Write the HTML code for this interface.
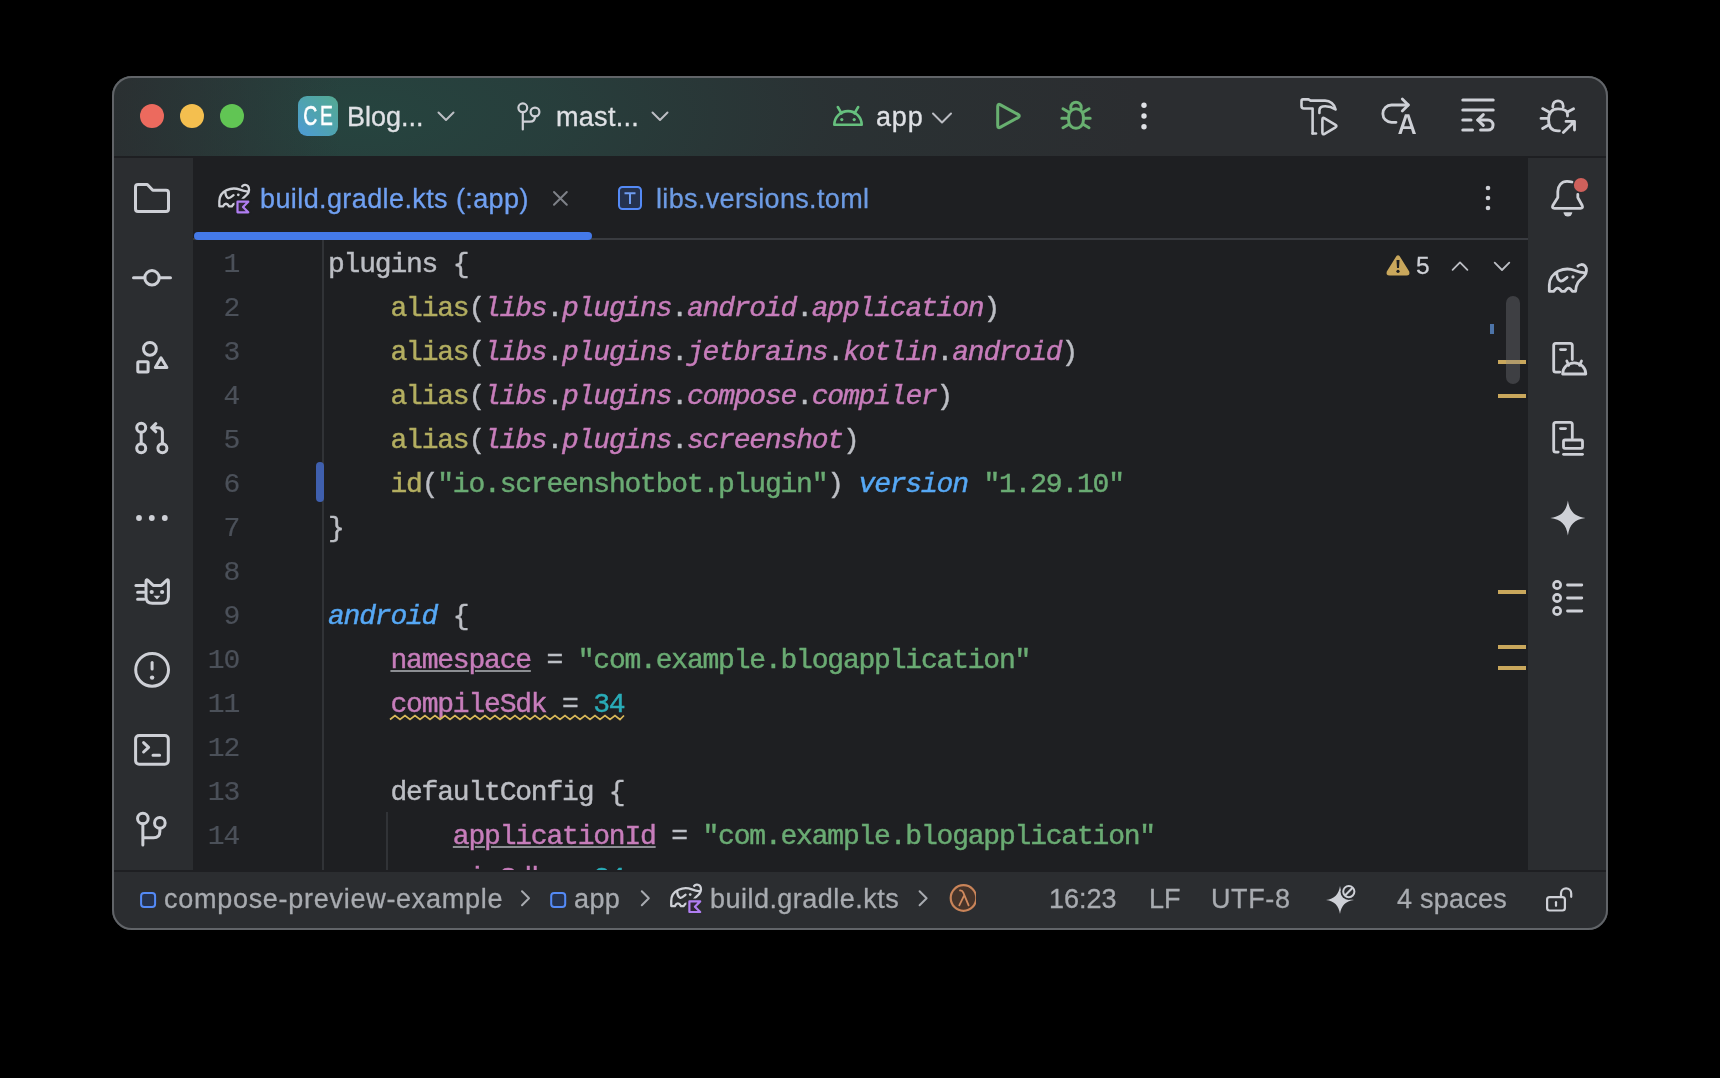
<!DOCTYPE html>
<html><head><meta charset="utf-8">
<style>
*{margin:0;padding:0;box-sizing:border-box}
html,body{width:1720px;height:1078px;background:#000;overflow:hidden}
body{position:relative;font-family:"Liberation Sans",sans-serif}
.code,.ui{will-change:transform}
.a{position:absolute}
.win{position:absolute;left:112px;top:76px;width:1496px;height:854px;border-radius:20px;background:#2B2D30;overflow:hidden}
.wb{position:absolute;left:112px;top:76px;width:1496px;height:854px;border-radius:20px;border:2px solid #616468;pointer-events:none}
.title{position:absolute;left:0;top:0;width:1496px;height:80px;background:#2B2D30}
.tg{position:absolute;left:0;top:0;width:1494px;height:80px;background:radial-gradient(ellipse 780px 320px at 250px 40px,rgba(38,68,63,1) 0%,rgba(39,64,61,0.9) 25%,rgba(41,54,55,0.5) 60%,rgba(43,45,48,0) 100%)}
.tg2{position:absolute;left:0;top:0;width:230px;height:80px;background:linear-gradient(to right,rgba(43,45,48,0.8),rgba(43,45,48,0))}
.sep{position:absolute;left:0;top:80px;width:1496px;height:2px;background:#1E1F22}
.tabs{position:absolute;left:81px;top:82px;width:1335px;height:82px;background:#1E1F22}
.tabline{position:absolute;left:81px;top:162px;width:1335px;height:2px;background:#393B40}
.editor{position:absolute;left:81px;top:164px;width:1335px;height:630px;background:#1E1F22}
.status{position:absolute;left:0;top:794px;width:1496px;height:60px;background:#2B2D30;border-top:2px solid #1E1F22}
.code{font-family:"Liberation Mono",monospace;font-size:28px;letter-spacing:-1.2px;-webkit-text-stroke:0.45px currentColor;white-space:pre;color:#BCBEC4;height:44px;line-height:44px;position:absolute}
.ln{width:56px;text-align:right;color:#4B5059;-webkit-text-stroke:0.2px currentColor}
.y{color:#B3AE60}.p{color:#C77DBB;font-style:italic}.s{color:#6AAB73}.b{color:#56A8F5;font-style:italic}.n{color:#2AACB8}.pu{color:#C77DBB}
.u{text-decoration:underline;text-decoration-color:#8c8e93;text-underline-offset:2px;text-decoration-thickness:2px}
.ui{position:absolute;font-family:"Liberation Sans",sans-serif;color:#DFE1E5;font-size:27px;-webkit-text-stroke:0.3px currentColor;white-space:pre;line-height:32px;height:32px}
.st{color:#A8ABB0}
svg{position:absolute;overflow:visible}
.ic{fill:none;stroke:#CED0D6;stroke-width:3;stroke-linecap:round;stroke-linejoin:round}
</style></head><body>
<div class="win">
  <div class="title"></div><div class="tg"></div><div class="tg2"></div>
  <div class="sep"></div>
  <div class="tabs"></div>
  <div class="editor"></div>
  <div class="tabline"></div>
  <div class="status"></div>
</div>
<div class="wb"></div>
<div class="a" style="left:140px;top:104px;width:24px;height:24px;border-radius:50%;background:#EC6A5E"></div>
<div class="a" style="left:180px;top:104px;width:24px;height:24px;border-radius:50%;background:#F4BF4F"></div>
<div class="a" style="left:220px;top:104px;width:24px;height:24px;border-radius:50%;background:#61C554"></div>

<div class="a" style="left:298px;top:96px;width:40px;height:40px;border-radius:9px;background:linear-gradient(45deg,#4D9AD6 0%,#4FA3B0 50%,#55AA92 100%)"></div>
<div class="a" style="left:290px;top:96px;width:56px;height:40px;color:#fff;font-family:'Liberation Sans',sans-serif;font-size:27.5px;line-height:40px;text-align:center;transform:scaleX(0.7);-webkit-text-stroke:0.7px #fff;letter-spacing:4px;text-indent:4px;will-change:transform">CE</div>
<div class="ui" style="left:347px;top:101px">Blog...</div>
<div class="ui" style="left:556px;top:101px;letter-spacing:0.3px">mast...</div>
<div class="ui" style="left:876px;top:101px;letter-spacing:0.8px">app</div>
<svg width="1720" height="1078" style="left:0;top:0">
 <g class="ic" style="stroke:#BCBEC4;stroke-width:2">
  <path d="M438.5 112.5 L446 120 L453.5 112.5"/>
  <path d="M652.5 112.5 L660 120 L667.5 112.5"/>
  <path d="M933 113.5 L942 122.5 L951 113.5"/>
 </g>
 <g class="ic" style="stroke:#CED0D6;stroke-width:2.2">
  <circle cx="522.8" cy="107.8" r="4.4"/>
  <circle cx="535" cy="112" r="4.4"/>
  <path d="M522.8 112.3 V129.5 M522.8 121.6 H530 Q535 121.6 535 116.4"/>
 </g>
 <g class="ic" style="stroke:#66C07E;stroke-width:2.6">
  <path d="M834.3 124.8 A13.7 13.7 0 0 1 861.7 124.8 Z"/>
  <path d="M837.8 107 L841.5 113.3 M858.2 107 L854.5 113.3"/>
 </g>
 <circle cx="841.8" cy="119.6" r="1.6" fill="#66C07E"/>
 <circle cx="854.2" cy="119.6" r="1.6" fill="#66C07E"/>
 <g class="ic" style="stroke:#68B070;stroke-width:3">
  <path d="M997.7 106.5 Q997.7 103.3 1000.5 104.9 L1018 114.4 Q1020.6 116 1018 117.6 L1000.5 127.1 Q997.7 128.7 997.7 125.5 Z"/>
 </g>
 <g class="ic" style="stroke:#68B070;stroke-width:3">
  <rect x="1068.6" y="108.7" width="14.8" height="19.6" rx="7.4" ry="8"/>
  <path d="M1070.8 108.5 V107.3 A5.2 5.2 0 0 1 1081.2 107.3 V108.5"/>
  <path d="M1063 108.8 L1068.5 112 M1061.8 118.3 H1067.5 M1063 127.7 L1068.5 124.5"/>
  <path d="M1089 108.8 L1083.5 112 M1090.2 118.3 H1084.5 M1089 127.7 L1083.5 124.5"/>
 </g>
 <g fill="#DFE1E5">
  <circle cx="1144" cy="105.2" r="2.7"/><circle cx="1144" cy="116" r="2.7"/><circle cx="1144" cy="126.8" r="2.7"/>
 </g>
 <g class="ic" style="stroke-width:2.6">
  <path d="M1312.6 133.5 V108.5 H1304 Q1301.5 108.5 1301.5 106 V101 Q1301.5 99.4 1303 99.4 H1308.5 L1310.5 100.6 H1325 C1330 100.6 1334.5 104 1335.6 109.5 C1331 106.5 1327 105.8 1322.5 106.5 C1320.3 107 1319.4 108.5 1319.4 110.5 V113"/>
  <path d="M1312.6 133.5 H1316"/>
  <path d="M1322.4 119.5 V132.5 Q1322.4 135 1324.6 133.8 L1335.5 127.3 Q1337.3 126 1335.5 124.8 L1324.6 118.3 Q1322.4 117 1322.4 119.5 Z"/>
 </g>
 <g class="ic" style="stroke-width:2.8">
  <path d="M1396 122.3 H1391.5 A8.6 8.6 0 0 1 1391.5 105 H1408.3"/>
  <path d="M1402.3 99 L1408.3 105 L1402.3 111"/>
 </g>
 <path d="M1398.2 134 L1404.9 114.2 H1409.3 L1416 134 H1412.6 L1411 129 H1403.2 L1401.6 134 Z M1404.1 126.2 H1410.1 L1407.1 117 Z" fill="#CED0D6"/>
 <g class="ic" style="stroke-width:3">
  <path d="M1462.8 100 H1493.2 M1462.8 110 H1493.2 M1462.8 120 H1471 M1462.8 130.1 H1472.5"/>
  <path d="M1480.6 130.1 H1488 A5 5 0 0 0 1488 120 H1477.8"/>
  <path d="M1483.3 114.6 L1477.8 120 L1483.3 125.4"/>
 </g>
 <g class="ic" style="stroke-width:2.8">
  <path d="M1552.8 107 V106 A5.2 5.2 0 0 1 1563.2 106 V107"/>
  <path d="M1567.5 115.5 V116 V114 Q1567.5 108.8 1558 108.8 Q1548.6 108.8 1548.6 119.9 Q1548.6 130.8 1558 130.8 H1559.5"/>
  <path d="M1542.6 108.6 L1549 112 M1541 118.4 H1547.5 M1542.6 128.5 L1549 124.8 M1573.6 108.8 L1567.5 112"/>
  <path d="M1563.3 132.6 L1574.5 121.4 M1566 121.4 H1574.5 V130"/>
 </g>
</svg>

<svg width="1720" height="1078" style="left:0;top:0">
 <g transform="translate(218.3 183.7) scale(0.8)">
  <path d="M29.9 3.2 C31.5 1.2 35 0.8 37 3 C39.2 5.5 38.8 10 36.5 12.8 C34.5 15.3 31.5 17 30 19.5 C28.2 22.5 27.6 25.5 27.6 28.3 H24.3 Q20.6 21.8 16.9 28.3 H13.5 Q9.6 21.8 5.8 28.3 H1.3 V22 C1.3 16 5 10.5 10.5 8 C16 5.5 22 5.5 27 7.5 C31 9 35 10.5 37.8 9.2 M8.8 9.5 C8.8 13 10 17 12.4 18 C14.5 18.8 17 16 19.1 14.3" fill="none" stroke="#CED0D6" stroke-width="2.9" stroke-linecap="round" stroke-linejoin="round"/>
  <circle cx="25" cy="13.9" r="1.7" fill="#CED0D6"/>
 </g>
 <path d="M237.5 201.7 H248.3 L243 207 L248.3 212.3 H237.5 Z" fill="#1E1F22" stroke="#1E1F22" stroke-width="6" stroke-linejoin="round"/>
 <path d="M237.5 201.7 H248.3 L243 207 L248.3 212.3 H237.5 Z" fill="#2D2636" stroke="#B07EF2" stroke-width="2.2" stroke-linejoin="round"/>
 <path d="M554 192 L566.8 204.8 M566.8 192 L554 204.8" stroke="#7E8188" stroke-width="2" stroke-linecap="round"/>
 <rect x="619" y="187" width="22" height="22" rx="3.5" fill="#25324D" stroke="#548AF7" stroke-width="2"/>
 <path d="M624.5 193.3 H635.5 M630 193.3 V204" stroke="#6E9CF0" stroke-width="2"/>
 <g fill="#CED0D6"><circle cx="1488" cy="188" r="2.3"/><circle cx="1488" cy="198" r="2.3"/><circle cx="1488" cy="208" r="2.3"/></g>
 <rect x="194" y="232" width="398" height="8" rx="4" fill="#4479E8"/>
</svg>
<div class="ui" style="left:260px;top:182.5px;color:#70A0F2;letter-spacing:0.4px">build.gradle.kts (:app)</div>
<div class="ui" style="left:656px;top:183px;color:#6D9BE3;letter-spacing:0.35px">libs.versions.toml</div>

<svg width="1720" height="1078" style="left:0;top:0">
 <g class="ic">
  <path d="M135.5 209 V187 Q135.5 184.5 138 184.5 H147.3 L152.8 190.3 H166 Q168.5 190.3 168.5 192.8 V209 Q168.5 211.5 166 211.5 H138 Q135.5 211.5 135.5 209 Z"/>
  <path d="M133.5 277.8 H144.8 M159.2 277.8 H170.5"/>
  <circle cx="152" cy="277.8" r="7.2"/>
  <circle cx="149.9" cy="348.8" r="6.4"/>
  <rect x="137.8" y="361.7" width="10.3" height="10.3" rx="1"/>
  <path d="M155.4 367.5 L161 357.8 L166.9 367.5 Z"/>
  <circle cx="141.2" cy="427.7" r="4.5"/>
  <circle cx="141.2" cy="448.3" r="4.5"/>
  <circle cx="162.4" cy="448.3" r="4.5"/>
  <path d="M141.2 432.2 V443.8 M162.4 443.8 V432 Q162.4 427.7 158 427.7 H151.8 M155.8 423.6 L151.6 427.7 L155.8 431.8"/>
  <path d="M146 596.5 V581.5 Q146 578.7 148.2 580.7 L153.2 585.4 H161.3 L166.3 580.7 Q168.4 578.7 168.4 581.5 V597 Q168.4 603.3 162 603.3 H152.4 Q146 603.3 146 597 Z"/>
  <path d="M135.9 585.4 H144 M137.6 592.3 H144 M137.6 599.2 H144"/>
  <circle cx="152.1" cy="669.8" r="16.4"/>
  <path d="M152.1 662.6 V669"/>
  <rect x="135.6" y="735.5" width="32.7" height="28.7" rx="3.5"/>
  <path d="M143.6 742.6 L148.6 747.3 L143.6 752 M153 755.3 H159.6"/>
  <circle cx="142.85" cy="818.5" r="5.3"/>
  <circle cx="159.85" cy="822.9" r="5.3"/>
  <path d="M142.85 823.8 V845 M142.85 837.8 H153.5 Q159.85 837.8 159.85 831.5 V828.2"/>
 </g>
 <g fill="#CED0D6">
  <circle cx="139" cy="518" r="2.9"/><circle cx="151.8" cy="518" r="2.9"/><circle cx="164.8" cy="518" r="2.9"/>
  <circle cx="151.7" cy="592" r="2.1"/><circle cx="162.1" cy="592" r="2.1"/>
  <path d="M153.6 595.8 H160.4 L157 599.6 Z"/>
  <circle cx="152.1" cy="677.6" r="2.2"/>
 </g>
 <!-- right stripe -->
 <g class="ic" style="stroke-width:2.8">
  <path d="M1572 182 Q1569.5 181.4 1567 181.4 C1561.5 181.4 1557.8 185.8 1557.8 191.5 V197.5 L1552.8 205.5 Q1551.6 208.3 1554.5 208.3 H1580.5 Q1583.4 208.3 1582.2 205.5 L1577.8 197.5 V194.5"/>
  <path d="M1563.2 357.5 V345.5 Q1563.2 342.5 1560 342.5" style="display:none"/>
  <path d="M1572.3 359.5 V345.5 Q1572.3 343.4 1570.2 343.4 H1555.8 Q1553.7 343.4 1553.7 345.5 V370 Q1553.7 372.1 1555.8 372.1 H1559.8"/>
  <path d="M1560.5 349.6 H1565.5"/>
  <path d="M1572.3 438 V424.5 Q1572.3 422.4 1570.2 422.4 H1555.8 Q1553.7 422.4 1553.7 424.5 V450 Q1553.7 452.1 1555.8 452.1 H1558.2"/>
  <path d="M1560.5 428.6 H1565.5"/>
  <rect x="1563.5" y="440" width="19" height="8.3" rx="1.5"/>
  <path d="M1563.5 454.3 H1582.5"/>
  <circle cx="1557.1" cy="585" r="3.6" style="stroke-width:2.6"/>
  <circle cx="1557.1" cy="598" r="3.6" style="stroke-width:2.6"/>
  <circle cx="1557.1" cy="611" r="3.6" style="stroke-width:2.6"/>
  <path d="M1567.5 585 H1581.8 M1567.5 598 H1581.8 M1567.5 611 H1581.8"/>
 </g>
 <g class="ic" style="stroke-width:2.8">
  <path d="M1562.6 374 A11.6 11.2 0 0 1 1585.8 374 Z"/>
  <path d="M1566.8 361 L1568.8 365.3 M1581.5 361 L1579.5 365.3"/>
 </g>
 <path d="M1563.5 212.3 H1572.3 A4.4 4.2 0 0 1 1563.5 212.3 Z" fill="#CED0D6"/>
 <circle cx="1581" cy="185" r="7.1" fill="#CF605B"/>
 <g transform="translate(1548 263)">
  <path d="M29.9 3.2 C31.5 1.2 35 0.8 37 3 C39.2 5.5 38.8 10 36.5 12.8 C34.5 15.3 31.5 17 30 19.5 C28.2 22.5 27.6 25.5 27.6 28.3 H24.3 Q20.6 21.8 16.9 28.3 H13.5 Q9.6 21.8 5.8 28.3 H1.3 V22 C1.3 16 5 10.5 10.5 8 C16 5.5 22 5.5 27 7.5 C31 9 35 10.5 37.8 9.2 M8.8 9.5 C8.8 13 10 17 12.4 18 C14.5 18.8 17 16 19.1 14.3" fill="none" stroke="#CED0D6" stroke-width="2.8" stroke-linecap="round" stroke-linejoin="round"/>
  <circle cx="25" cy="13.9" r="1.6" fill="#CED0D6"/>
 </g>
 <path d="M1567.9 500.4 C1569.5 511.5 1574.5 516.4 1585.5 518 C1574.5 519.6 1569.5 524.5 1567.9 535.5 C1566.3 524.5 1561.3 519.6 1550.3 518 C1561.3 516.4 1566.3 511.5 1567.9 500.4 Z" fill="#CED0D6"/>
</svg>

<div class="a" style="left:193px;top:240px;width:1334px;height:630px;overflow:hidden">
<div class="a" style="left:129px;top:0;width:2px;height:630px;background:#313337"></div>
<div class="a" style="left:193px;top:572px;width:2px;height:58px;background:#313337"></div>
<div class="a" style="left:123px;top:222px;width:8px;height:40px;border-radius:4px;background:#3F5FAE"></div>
<div class="code ln" style="top:3.40px;left:-10px">1</div>
<div class="code cl" style="top:3.40px;left:135px">plugins {</div>
<div class="code ln" style="top:47.35px;left:-10px">2</div>
<div class="code cl" style="top:47.35px;left:135px">    <span class="y">alias</span>(<span class="p">libs</span>.<span class="p">plugins</span>.<span class="p">android</span>.<span class="p">application</span>)</div>
<div class="code ln" style="top:91.30px;left:-10px">3</div>
<div class="code cl" style="top:91.30px;left:135px">    <span class="y">alias</span>(<span class="p">libs</span>.<span class="p">plugins</span>.<span class="p">jetbrains</span>.<span class="p">kotlin</span>.<span class="p">android</span>)</div>
<div class="code ln" style="top:135.25px;left:-10px">4</div>
<div class="code cl" style="top:135.25px;left:135px">    <span class="y">alias</span>(<span class="p">libs</span>.<span class="p">plugins</span>.<span class="p">compose</span>.<span class="p">compiler</span>)</div>
<div class="code ln" style="top:179.20px;left:-10px">5</div>
<div class="code cl" style="top:179.20px;left:135px">    <span class="y">alias</span>(<span class="p">libs</span>.<span class="p">plugins</span>.<span class="p">screenshot</span>)</div>
<div class="code ln" style="top:223.15px;left:-10px">6</div>
<div class="code cl" style="top:223.15px;left:135px">    <span class="y">id</span>(<span class="s">"io.screenshotbot.plugin"</span>) <span class="b">version</span> <span class="s">"1.29.10"</span></div>
<div class="code ln" style="top:267.10px;left:-10px">7</div>
<div class="code cl" style="top:267.10px;left:135px">}</div>
<div class="code ln" style="top:311.05px;left:-10px">8</div>
<div class="code cl" style="top:311.05px;left:135px"></div>
<div class="code ln" style="top:355.00px;left:-10px">9</div>
<div class="code cl" style="top:355.00px;left:135px"><span class="b">android</span> {</div>
<div class="code ln" style="top:398.95px;left:-10px">10</div>
<div class="code cl" style="top:398.95px;left:135px">    <span class="pu u">namespace</span> = <span class="s">"com.example.blogapplication"</span></div>
<div class="code ln" style="top:442.90px;left:-10px">11</div>
<div class="code cl" style="top:442.90px;left:135px">    <span class="pu">compileSdk</span> = <span class="n">34</span></div>
<div class="code ln" style="top:486.85px;left:-10px">12</div>
<div class="code cl" style="top:486.85px;left:135px"></div>
<div class="code ln" style="top:530.80px;left:-10px">13</div>
<div class="code cl" style="top:530.80px;left:135px">    defaultConfig {</div>
<div class="code ln" style="top:574.75px;left:-10px">14</div>
<div class="code cl" style="top:574.75px;left:135px">        <span class="pu u">applicationId</span> = <span class="s">"com.example.blogapplication"</span></div>
<div class="code cl" style="top:616.70px;left:135px">        <span class="pu">minSdk</span> = <span class="n">24</span></div>
</div>
<svg width="1720" height="1078" style="left:0;top:0"><path d="M390 719.5 L395.0 715.5 L400.0 719.5 L405.0 715.5 L410.0 719.5 L415.0 715.5 L420.0 719.5 L425.0 715.5 L430.0 719.5 L435.0 715.5 L440.0 719.5 L445.0 715.5 L450.0 719.5 L455.0 715.5 L460.0 719.5 L465.0 715.5 L470.0 719.5 L475.0 715.5 L480.0 719.5 L485.0 715.5 L490.0 719.5 L495.0 715.5 L500.0 719.5 L505.0 715.5 L510.0 719.5 L515.0 715.5 L520.0 719.5 L525.0 715.5 L530.0 719.5 L535.0 715.5 L540.0 719.5 L545.0 715.5 L550.0 719.5 L555.0 715.5 L560.0 719.5 L565.0 715.5 L570.0 719.5 L575.0 715.5 L580.0 719.5 L585.0 715.5 L590.0 719.5 L595.0 715.5 L600.0 719.5 L605.0 715.5 L610.0 719.5 L615.0 715.5 L620.0 719.5 L624.0 715.5" fill="none" stroke="#D9B95A" stroke-width="1.7" stroke-linejoin="miter"/></svg>
<svg width="1720" height="1078" style="left:0;top:0">
 <path d="M1398 256.5 Q1398 254.2 1396.3 256.2 L1386.8 271.5 Q1385.6 275.5 1389.5 275.5 H1406.5 Q1410.4 275.5 1409.2 271.5 L1399.7 256.2 Q1398 254.2 1398 256.5 Z" fill="#C9A75C"/>
 <path d="M1396.5 260 L1399.5 260 L1399 268 L1397 268 Z" fill="#1E1F22"/>
 <circle cx="1398" cy="271.3" r="1.6" fill="#1E1F22"/>
 <g fill="none" stroke="#BCBEC4" stroke-width="1.8" stroke-linecap="round" stroke-linejoin="round">
  <path d="M1452.6 269.8 L1460 262.4 L1467.4 269.8"/>
  <path d="M1494.7 262.6 L1502 270 L1509.3 262.6"/>
 </g>
 <rect x="1490" y="324" width="4" height="10" fill="#4D74A8"/>
 <g fill="#C9A75C">
  <rect x="1498" y="360" width="28" height="4"/>
  <rect x="1498" y="394" width="28" height="4"/>
  <rect x="1498" y="590" width="28" height="4"/>
  <rect x="1498" y="645" width="28" height="4"/>
  <rect x="1498" y="666" width="28" height="4"/>
 </g>
 <rect x="1506" y="296" width="14" height="88" rx="7" fill="rgba(130,132,138,0.32)"/>
</svg>
<div class="ui" style="left:1416px;top:250px;color:#CED0D6;font-size:24.5px">5</div>

<svg width="1720" height="1078" style="left:0;top:0">
 <rect x="141.1" y="893" width="14" height="14" rx="3" fill="#25324D" stroke="#548AF7" stroke-width="2"/>
 <rect x="551.2" y="893" width="14" height="14" rx="3" fill="#25324D" stroke="#548AF7" stroke-width="2"/>
 <g fill="none" stroke="#A8ABB0" stroke-width="2" stroke-linecap="round" stroke-linejoin="round">
  <path d="M522 891.2 L529 898.2 L522 905.2"/>
  <path d="M641.8 891.2 L648.8 898.2 L641.8 905.2"/>
  <path d="M919.6 891.2 L926.6 898.2 L919.6 905.2"/>
 </g>
 <g transform="translate(670.2 883.4) scale(0.8)">
  <path d="M29.9 3.2 C31.5 1.2 35 0.8 37 3 C39.2 5.5 38.8 10 36.5 12.8 C34.5 15.3 31.5 17 30 19.5 C28.2 22.5 27.6 25.5 27.6 28.3 H24.3 Q20.6 21.8 16.9 28.3 H13.5 Q9.6 21.8 5.8 28.3 H1.3 V22 C1.3 16 5 10.5 10.5 8 C16 5.5 22 5.5 27 7.5 C31 9 35 10.5 37.8 9.2 M8.8 9.5 C8.8 13 10 17 12.4 18 C14.5 18.8 17 16 19.1 14.3" fill="none" stroke="#CED0D6" stroke-width="2.9" stroke-linecap="round" stroke-linejoin="round"/>
  <circle cx="25" cy="13.9" r="1.7" fill="#CED0D6"/>
 </g>
 <path d="M689.4 901.4 H700.2 L694.9 906.7 L700.2 912 H689.4 Z" fill="#2B2D30" stroke="#2B2D30" stroke-width="6" stroke-linejoin="round"/>
 <path d="M689.4 901.4 H700.2 L694.9 906.7 L700.2 912 H689.4 Z" fill="#2D2636" stroke="#B07EF2" stroke-width="2.2" stroke-linejoin="round"/>
 <circle cx="963.5" cy="898" r="12.8" fill="#46342A" stroke="#C98459" stroke-width="2.2"/>
 <path d="M960 890.5 Q962.3 890.2 963.3 892.6 L968.6 905.3 M964.2 895.4 L959.3 905.3" fill="none" stroke="#D08A5E" stroke-width="1.8" stroke-linecap="round"/>
 <rect x="976" y="880" width="8" height="36" fill="#2B2D30"/>
 <path d="M1340 886 C1341.2 894.5 1345.5 898.8 1354 900 C1345.5 901.2 1341.2 905.5 1340 914 C1338.8 905.5 1334.5 901.2 1326 900 C1334.5 898.8 1338.8 894.5 1340 886 Z" fill="#CED0D6"/>
 <circle cx="1348.8" cy="891.6" r="8.3" fill="#2B2D30"/>
 <circle cx="1348.8" cy="891.6" r="5.6" fill="none" stroke="#CED0D6" stroke-width="2"/>
 <path d="M1345.2 895.2 L1352.4 888" stroke="#CED0D6" stroke-width="2"/>
 <g fill="none" stroke="#CED0D6" stroke-width="2.2" stroke-linecap="round">
  <rect x="1547.1" y="897.1" width="17.8" height="13.4" rx="2.5"/>
  <path d="M1561 896.5 V893.5 A5.1 5.1 0 0 1 1571.2 893.5 V896.8"/>
  <path d="M1556 902.2 V905.8"/>
 </g>
</svg>
<div class="ui st" style="left:164px;top:883px;letter-spacing:0.72px">compose-preview-example</div>
<div class="ui st" style="left:574px;top:883px;letter-spacing:0.4px">app</div>
<div class="ui st" style="left:710px;top:883px;letter-spacing:0.47px">build.gradle.kts</div>
<div class="ui st" style="left:1049px;top:883px">16:23</div>
<div class="ui st" style="left:1149px;top:883px">LF</div>
<div class="ui st" style="left:1211px;top:883px;letter-spacing:0.6px">UTF-8</div>
<div class="ui st" style="left:1397px;top:883px;letter-spacing:0.25px">4 spaces</div>

</body></html>
